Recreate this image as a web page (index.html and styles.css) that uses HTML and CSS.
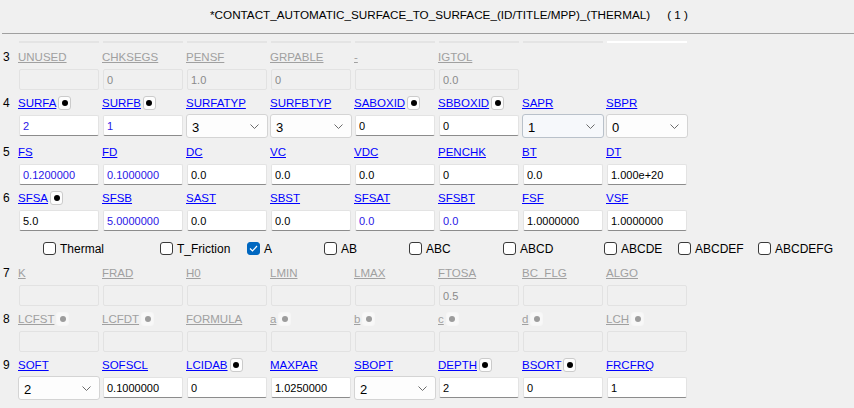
FILE: index.html
```html
<!DOCTYPE html>
<html lang="en">
<head>
  <meta charset="UTF-8" />
  <title>*CONTACT_AUTOMATIC_SURFACE_TO_SURFACE</title>
  <link rel="stylesheet" href="styles.css">
</head>
<body>

<div class="title">*CONTACT_AUTOMATIC_SURFACE_TO_SURFACE_(ID/TITLE/MPP)_(THERMAL)<span class="count">(&nbsp;1&nbsp;)</span></div>

<!-- bottom of the card scrolled above -->
<div class="peek">
  <span></span><span></span><span></span><span></span><span></span><span></span><span></span><span class="is-white"></span>
</div>

<div class="card">
  <div class="card-num">3</div>
  <div class="field is-off"><div class="field-head"><a class="field-name">UNUSED</a></div><input class="field-input" readonly></div>
  <div class="field is-off"><div class="field-head"><a class="field-name">CHKSEGS</a></div><input class="field-input" value="0" readonly></div>
  <div class="field is-off"><div class="field-head"><a class="field-name">PENSF</a></div><input class="field-input" value="1.0" readonly></div>
  <div class="field is-off"><div class="field-head"><a class="field-name">GRPABLE</a></div><input class="field-input" value="0" readonly></div>
  <div class="field is-off"><div class="field-head"><a class="field-name">-</a></div><input class="field-input" readonly></div>
  <div class="field is-off"><div class="field-head"><a class="field-name">IGTOL</a></div><input class="field-input" value="0.0" readonly></div>
</div>

<div class="card has-select">
  <div class="card-num">4</div>
  <div class="field"><div class="field-head"><a class="field-name">SURFA</a><span class="pin"></span></div><input class="field-input is-blue" value="2" readonly></div>
  <div class="field"><div class="field-head"><a class="field-name">SURFB</a><span class="pin"></span></div><input class="field-input is-blue" value="1" readonly></div>
  <div class="field"><div class="field-head"><a class="field-name">SURFATYP</a></div>
    <div class="select"><span>3</span><svg width="9" height="5" viewBox="0 0 9 5"><polyline points="0.5,0.5 4.5,4.5 8.5,0.5" fill="none" stroke="#6b6b6b" stroke-width="1"/></svg></div></div>
  <div class="field"><div class="field-head"><a class="field-name">SURFBTYP</a></div>
    <div class="select"><span>3</span><svg width="9" height="5" viewBox="0 0 9 5"><polyline points="0.5,0.5 4.5,4.5 8.5,0.5" fill="none" stroke="#6b6b6b" stroke-width="1"/></svg></div></div>
  <div class="field"><div class="field-head"><a class="field-name">SABOXID</a><span class="pin"></span></div><input class="field-input" value="0" readonly></div>
  <div class="field"><div class="field-head"><a class="field-name">SBBOXID</a><span class="pin"></span></div><input class="field-input" value="0" readonly></div>
  <div class="field"><div class="field-head"><a class="field-name">SAPR</a></div>
    <div class="select is-hover"><span>1</span><svg width="9" height="5" viewBox="0 0 9 5"><polyline points="0.5,0.5 4.5,4.5 8.5,0.5" fill="none" stroke="#6b6b6b" stroke-width="1"/></svg></div></div>
  <div class="field"><div class="field-head"><a class="field-name">SBPR</a></div>
    <div class="select"><span>0</span><svg width="9" height="5" viewBox="0 0 9 5"><polyline points="0.5,0.5 4.5,4.5 8.5,0.5" fill="none" stroke="#6b6b6b" stroke-width="1"/></svg></div></div>
</div>

<div class="card">
  <div class="card-num">5</div>
  <div class="field"><div class="field-head"><a class="field-name">FS</a></div><input class="field-input is-blue" value="0.1200000" readonly></div>
  <div class="field"><div class="field-head"><a class="field-name">FD</a></div><input class="field-input is-blue" value="0.1000000" readonly></div>
  <div class="field"><div class="field-head"><a class="field-name">DC</a></div><input class="field-input" value="0.0" readonly></div>
  <div class="field"><div class="field-head"><a class="field-name">VC</a></div><input class="field-input" value="0.0" readonly></div>
  <div class="field"><div class="field-head"><a class="field-name">VDC</a></div><input class="field-input" value="0.0" readonly></div>
  <div class="field"><div class="field-head"><a class="field-name">PENCHK</a></div><input class="field-input" value="0" readonly></div>
  <div class="field"><div class="field-head"><a class="field-name">BT</a></div><input class="field-input" value="0.0" readonly></div>
  <div class="field"><div class="field-head"><a class="field-name">DT</a></div><input class="field-input" value="1.000e+20" readonly></div>
</div>

<div class="card">
  <div class="card-num">6</div>
  <div class="field"><div class="field-head"><a class="field-name">SFSA</a><span class="pin"></span></div><input class="field-input" value="5.0" readonly></div>
  <div class="field"><div class="field-head"><a class="field-name">SFSB</a></div><input class="field-input is-blue" value="5.0000000" readonly></div>
  <div class="field"><div class="field-head"><a class="field-name">SAST</a></div><input class="field-input" value="0.0" readonly></div>
  <div class="field"><div class="field-head"><a class="field-name">SBST</a></div><input class="field-input" value="0.0" readonly></div>
  <div class="field"><div class="field-head"><a class="field-name">SFSAT</a></div><input class="field-input is-blue" value="0.0" readonly></div>
  <div class="field"><div class="field-head"><a class="field-name">SFSBT</a></div><input class="field-input is-blue" value="0.0" readonly></div>
  <div class="field"><div class="field-head"><a class="field-name">FSF</a></div><input class="field-input" value="1.0000000" readonly></div>
  <div class="field"><div class="field-head"><a class="field-name">VSF</a></div><input class="field-input" value="1.0000000" readonly></div>
</div>

<div class="checks">
  <label class="check"><span class="check-box"></span>Thermal</label>
  <label class="check"><span class="check-box"></span>T_Friction</label>
  <label class="check"><span class="check-box is-on"><svg width="9" height="7" viewBox="0 0 9 7"><polyline points="1,3.5 3.5,6 8,1" fill="none" stroke="#fff" stroke-width="1.2"/></svg></span>A</label>
  <label class="check"><span class="check-box"></span>AB</label>
  <label class="check"><span class="check-box"></span>ABC</label>
  <label class="check"><span class="check-box"></span>ABCD</label>
  <label class="check"><span class="check-box"></span>ABCDE</label>
  <label class="check"><span class="check-box"></span>ABCDEF</label>
  <label class="check"><span class="check-box"></span>ABCDEFG</label>
</div>

<div class="card">
  <div class="card-num">7</div>
  <div class="field is-off"><div class="field-head"><a class="field-name">K</a></div><input class="field-input" readonly></div>
  <div class="field is-off"><div class="field-head"><a class="field-name">FRAD</a></div><input class="field-input" readonly></div>
  <div class="field is-off"><div class="field-head"><a class="field-name">H0</a></div><input class="field-input" readonly></div>
  <div class="field is-off"><div class="field-head"><a class="field-name">LMIN</a></div><input class="field-input" readonly></div>
  <div class="field is-off"><div class="field-head"><a class="field-name">LMAX</a></div><input class="field-input" readonly></div>
  <div class="field is-off"><div class="field-head"><a class="field-name">FTOSA</a></div><input class="field-input" value="0.5" readonly></div>
  <div class="field is-off"><div class="field-head"><a class="field-name">BC_FLG</a></div><input class="field-input" readonly></div>
  <div class="field is-off"><div class="field-head"><a class="field-name">ALGO</a></div><input class="field-input" readonly></div>
</div>

<div class="card">
  <div class="card-num">8</div>
  <div class="field is-off"><div class="field-head"><a class="field-name">LCFST</a><span class="pin"></span></div><input class="field-input" readonly></div>
  <div class="field is-off"><div class="field-head"><a class="field-name">LCFDT</a><span class="pin"></span></div><input class="field-input" readonly></div>
  <div class="field is-off"><div class="field-head"><a class="field-name">FORMULA</a></div><input class="field-input" readonly></div>
  <div class="field is-off"><div class="field-head"><a class="field-name">a</a><span class="pin"></span></div><input class="field-input" readonly></div>
  <div class="field is-off"><div class="field-head"><a class="field-name">b</a><span class="pin"></span></div><input class="field-input" readonly></div>
  <div class="field is-off"><div class="field-head"><a class="field-name">c</a><span class="pin"></span></div><input class="field-input" readonly></div>
  <div class="field is-off"><div class="field-head"><a class="field-name">d</a><span class="pin"></span></div><input class="field-input" readonly></div>
  <div class="field is-off"><div class="field-head"><a class="field-name">LCH</a><span class="pin"></span></div><input class="field-input" readonly></div>
</div>

<div class="card has-select">
  <div class="card-num">9</div>
  <div class="field"><div class="field-head"><a class="field-name">SOFT</a></div>
    <div class="select"><span>2</span><svg width="9" height="5" viewBox="0 0 9 5"><polyline points="0.5,0.5 4.5,4.5 8.5,0.5" fill="none" stroke="#6b6b6b" stroke-width="1"/></svg></div></div>
  <div class="field"><div class="field-head"><a class="field-name">SOFSCL</a></div><input class="field-input" value="0.1000000" readonly></div>
  <div class="field"><div class="field-head"><a class="field-name">LCIDAB</a><span class="pin"></span></div><input class="field-input" value="0" readonly></div>
  <div class="field"><div class="field-head"><a class="field-name">MAXPAR</a></div><input class="field-input" value="1.0250000" readonly></div>
  <div class="field"><div class="field-head"><a class="field-name">SBOPT</a></div>
    <div class="select"><span>2</span><svg width="9" height="5" viewBox="0 0 9 5"><polyline points="0.5,0.5 4.5,4.5 8.5,0.5" fill="none" stroke="#6b6b6b" stroke-width="1"/></svg></div></div>
  <div class="field"><div class="field-head"><a class="field-name">DEPTH</a><span class="pin"></span></div><input class="field-input" value="2" readonly></div>
  <div class="field"><div class="field-head"><a class="field-name">BSORT</a><span class="pin"></span></div><input class="field-input" value="0" readonly></div>
  <div class="field"><div class="field-head"><a class="field-name">FRCFRQ</a></div><input class="field-input" value="1" readonly></div>
</div>

</body>
</html>
```

FILE: styles.css
```css
* { box-sizing: border-box; }
body {
  margin: 0;
  background: #f0f0f0;
  color: #000;
  font-family: "Liberation Sans", Arial, sans-serif;
  font-size: 12px;
  overflow: hidden;
}

.title {
  height: 34px;
  margin-left: 2px;
  padding-left: 42px;
  border-bottom: 1px solid #a0a0a0;
  text-align: center;
  line-height: 30px;
  font-size: 11.7px;
}
.title .count { margin-left: 17px; }

.peek {
  display: flex;
  gap: 4px;
  height: 10px;
  padding: 7px 0 0 19px;
}
.peek span {
  width: 80px;
  height: 2px;
  background: #e4e4e4;
}
.peek span.is-white { background: #fff; }

.card {
  display: flex;
  height: 46px;
}
.card.has-select {
  height: 49px;
}

.card-num {
  width: 18px;
  height: 24px;
  padding: 2px 0 0 3px;
  line-height: 22px;
}

.field {
  width: 84px;
}

.field-head {
  display: flex;
  align-items: center;
  gap: 2px;
  height: 24px;
  padding-top: 2px;
}

.field-name {
  color: #0000ff;
  text-decoration: underline;
  font-size: 11.5px;
  cursor: pointer;
}

.pin {
  display: flex;
  align-items: center;
  justify-content: center;
  width: 13px;
  height: 14px;
  border: 1px solid #cbcbcb;
  border-radius: 3px;
  background: #fdfdfd;
}
.pin::after {
  content: "";
  width: 6px;
  height: 6px;
  border-radius: 50%;
  background: #000;
}

.field-input {
  display: block;
  width: 80px;
  height: 21px;
  margin: 1px 0 0 1px;
  padding: 0 3px;
  border: 1px solid #e3e3e3;
  border-bottom-color: #8c8c8c;
  border-radius: 2px;
  background: #fff;
  color: #000;
  font-family: "Liberation Sans", Arial, sans-serif;
  font-size: 11px;
  outline: none;
}
.field-input.is-blue { color: #2a16e6; }

.select {
  display: flex;
  align-items: center;
  justify-content: space-between;
  width: 82px;
  height: 24px;
  padding: 2px 8px 0 5px;
  border: 1px solid #d4d4d4;
  border-radius: 3px;
  background: #fdfdfd;
  font-size: 13px;
}
.select svg { margin-top: -2px; }
.select.is-hover {
  background: #f6f8fb;
  border-color: #b9c1ca;
}

/* disabled cards */
.field.is-off .field-name { color: #a0a0a0; }
.field.is-off .field-input {
  background: transparent;
  border-color: #e2e2e2;
  color: #8a8a8a;
}
.field.is-off .pin {
  border-color: #f6f6f6;
  background: #f8f8f8;
}
.field.is-off .pin::after { background: #9c9c9c; }

.checks {
  display: grid;
  grid-template-columns: 117px 87px 77px 85px 94px 101px 74px 80px auto;
  height: 29px;
  padding: 11px 0 0 43px;
}
.check {
  display: flex;
  align-items: center;
  gap: 4px;
  height: 13px;
  font-size: 12px;
}
.check-box {
  display: flex;
  align-items: center;
  justify-content: center;
  width: 13px;
  height: 13px;
  border: 1px solid #3a3a3a;
  border-radius: 3px;
  background: #fff;
}
.check-box.is-on {
  background: #0067c0;
  border-color: #0067c0;
}
```
